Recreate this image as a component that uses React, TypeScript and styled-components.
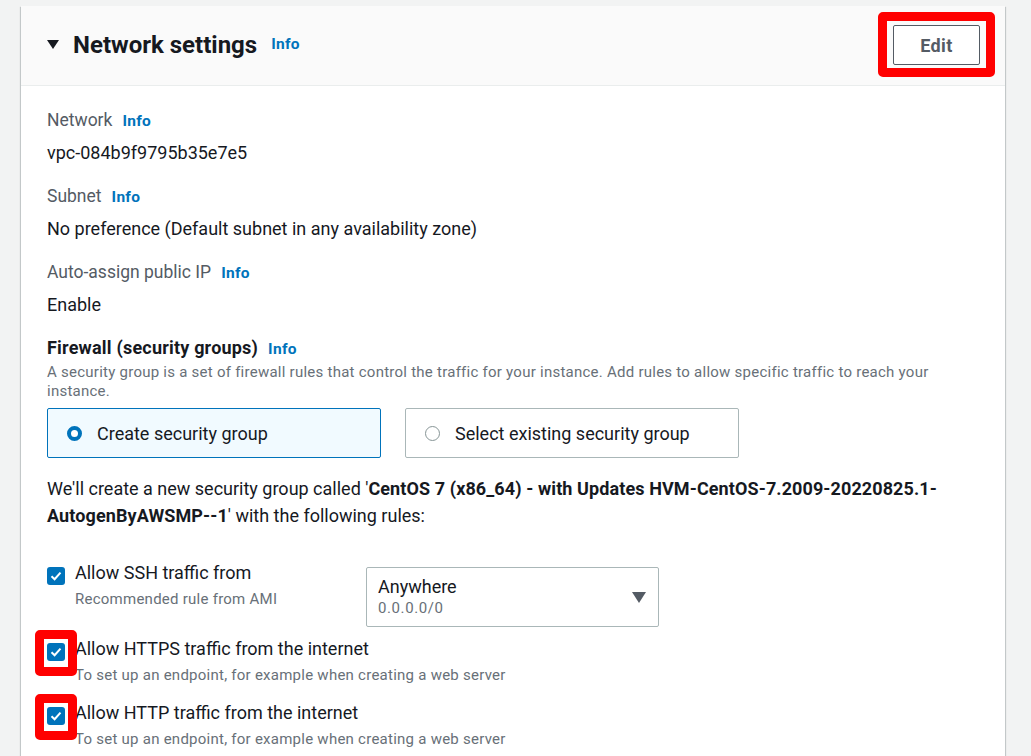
import React from "react";
import styled, { createGlobalStyle } from "styled-components";

const GlobalStyle = createGlobalStyle`
  html, body {
    margin: 0;
    padding: 0;
    background: #f2f3f3;
    font-family: Roboto, "Liberation Sans", sans-serif;
    color: #16191f;
  }
  * { box-sizing: border-box; }
`;

const Page = styled.div`
  padding: 6px 26px 0 21px;
  height: 756px;
  overflow: hidden;
`;

const Card = styled.section`
  width: 984px;
  background: #fff;
  box-shadow: 0 1px 1px 0 rgba(0, 28, 36, 0.3), 1px 1px 1px 0 rgba(0, 28, 36, 0.15),
    -1px 1px 1px 0 rgba(0, 28, 36, 0.15);
`;

const Header = styled.header`
  height: 80px;
  display: flex;
  align-items: center;
  justify-content: space-between;
  padding: 0 26px 2px;
  background: #fafafa;
  border-bottom: 1px solid #eaeded;
`;

const TitleRow = styled.div`
  display: flex;
  align-items: baseline;
  gap: 14px;
`;

const Title = styled.h2`
  margin: 0;
  display: flex;
  align-items: center;
  gap: 14px;
  font-size: 24px;
  font-weight: 700;
  color: #16191f;
`;

const Caret = styled.span`
  width: 0;
  height: 0;
  border-left: 6.5px solid transparent;
  border-right: 6.5px solid transparent;
  border-top: 9px solid #16191f;
`;

const InfoLink = styled.a`
  font-size: 15.5px;
  font-weight: 700;
  letter-spacing: 0.3px;
  color: #0073bb;
  text-decoration: none;
`;

const Highlight = styled.div`
  border: 9px solid #ff0000;
  border-radius: 5px;
  padding: 4px 6px 3px 6px;
  margin-right: -16px;
`;

const EditButton = styled.button`
  width: 87px;
  height: 40px;
  background: #fff;
  border: 1px solid #545b64;
  border-radius: 2px;
  font-family: inherit;
  font-size: 18px;
  font-weight: 700;
  letter-spacing: 0.4px;
  color: #545b64;
`;

const Body = styled.div`
  padding: 22px 26px 30px;
`;

const Field = styled.div`
  margin-bottom: 19px;
`;

const Label = styled.div`
  display: flex;
  align-items: baseline;
  gap: 10px;
  height: 24px;
  font-size: 17.5px;
  line-height: 24px;
  color: #545b64;
`;

const Value = styled.div`
  margin-top: 9px;
  height: 24px;
  font-size: 18px;
  line-height: 24px;
  color: #16191f;
`;

const StrongLabel = styled(Label)`
  font-size: 18px;
  font-weight: 700;
  letter-spacing: 0.2px;
  color: #16191f;
`;

const Description = styled.p`
  margin: 3px 0 0;
  font-size: 15px;
  letter-spacing: 0.25px;
  line-height: 19px;
  color: #687078;
`;

const Tiles = styled.div`
  display: flex;
  gap: 24px;
  margin-top: 7px;
`;

const Tile = styled.div<{ $active?: boolean }>`
  width: 334px;
  height: 50px;
  display: flex;
  align-items: center;
  gap: 15px;
  padding-left: 19px;
  border: 1px solid ${(p) => (p.$active ? "#0073bb" : "#aab7b8")};
  border-radius: 2px;
  background: ${(p) => (p.$active ? "#f1faff" : "#fff")};
  font-size: 18px;
  color: #16191f;
`;

const Radio = styled.span<{ $checked?: boolean }>`
  width: 15px;
  height: 15px;
  border-radius: 50%;
  background: #fff;
  border: ${(p) => (p.$checked ? "4.5px solid #0073bb" : "1px solid #879596")};
`;

const Notice = styled.p`
  margin: 17px 0 0;
  font-size: 18px;
  line-height: 27px;
  color: #16191f;
  b {
    font-weight: 700;
    letter-spacing: 0.1px;
  }
`;

const Rules = styled.div`
  display: flex;
  flex-direction: column;
  gap: 10px;
  margin-top: 32px;
`;

const Rule = styled.div`
  display: flex;
  align-items: flex-start;
  min-height: 54px;
`;

const RuleMain = styled.div<{ $width?: number }>`
  display: flex;
  align-items: flex-start;
  gap: 10px;
  width: ${(p) => (p.$width ? `${p.$width}px` : "auto")};
`;

const CheckWrap = styled.span`
  position: relative;
  margin-top: 6px;
  display: inline-flex;
`;

const Check = styled.span`
  width: 18px;
  height: 18px;
  border-radius: 3px;
  background: #0073bb;
  display: inline-flex;
  align-items: center;
  justify-content: center;
`;

const Mark = styled.span`
  position: absolute;
  top: -13px;
  left: -12px;
  right: -12px;
  bottom: -15px;
  border: 9px solid #ff0000;
  border-radius: 5px;
`;

const RuleText = styled.div`
  display: flex;
  flex-direction: column;
`;

const RuleLabel = styled.span`
  font-size: 18px;
  line-height: 24px;
  color: #16191f;
`;

const RuleHint = styled.span`
  margin-top: 4px;
  font-size: 15px;
  letter-spacing: 0.25px;
  line-height: 20px;
  color: #687078;
`;

const Select = styled.div`
  margin-top: 6px;
  width: 293px;
  height: 60px;
  border: 1px solid #aab7b8;
  border-radius: 2px;
  display: flex;
  align-items: center;
  justify-content: space-between;
  padding: 0 12px 0 11px;
`;

const SelectMain = styled.span`
  font-size: 18px;
  line-height: 22px;
  color: #16191f;
`;

const SelectSub = styled.span`
  margin-top: 1px;
  font-size: 15px;
  letter-spacing: 0.6px;
  line-height: 19px;
  color: #687078;
`;

const SelectText = styled.div`
  display: flex;
  flex-direction: column;
`;

const SelectCaret = styled.span`
  width: 0;
  height: 0;
  border-left: 7px solid transparent;
  border-right: 7px solid transparent;
  border-top: 11px solid #545b64;
`;

const Tick = () => (
  <svg width="12" height="10" viewBox="0 0 12 10">
    <path d="M1.5 5.2 L4.6 8.2 L10.5 1.6" fill="none" stroke="#fff" strokeWidth="2" />
  </svg>
);

const Checkbox = ({ marked }: { marked?: boolean }) => (
  <CheckWrap>
    <Check>
      <Tick />
    </Check>
    {marked && <Mark />}
  </CheckWrap>
);

const fields = [
  { label: "Network", value: "vpc-084b9f9795b35e7e5" },
  { label: "Subnet", value: "No preference (Default subnet in any availability zone)" },
  { label: "Auto-assign public IP", value: "Enable" },
];

const hint = "To set up an endpoint, for example when creating a web server";

const App = () => {
  return (
    <>
      <GlobalStyle />
      <Page>
        <Card>
          <Header>
            <TitleRow>
              <Title>
                <Caret />
                Network settings
              </Title>
              <InfoLink>Info</InfoLink>
            </TitleRow>
            <Highlight>
              <EditButton>Edit</EditButton>
            </Highlight>
          </Header>
          <Body>
            {fields.map((f) => (
              <Field key={f.label}>
                <Label>
                  {f.label}
                  <InfoLink>Info</InfoLink>
                </Label>
                <Value>{f.value}</Value>
              </Field>
            ))}
            <StrongLabel>
              Firewall (security groups)
              <InfoLink>Info</InfoLink>
            </StrongLabel>
            <Description>
              A security group is a set of firewall rules that control the traffic for your
              instance. Add rules to allow specific traffic to reach your instance.
            </Description>
            <Tiles>
              <Tile $active>
                <Radio $checked />
                Create security group
              </Tile>
              <Tile>
                <Radio />
                Select existing security group
              </Tile>
            </Tiles>
            <Notice>
              {"We'll create a new security group called '"}
              <b>CentOS 7 (x86_64) - with Updates HVM-CentOS-7.2009-20220825.1-AutogenByAWSMP--1</b>
              {"' with the following rules:"}
            </Notice>
            <Rules>
              <Rule>
                <RuleMain $width={319}>
                  <Checkbox />
                  <RuleText>
                    <RuleLabel>Allow SSH traffic from</RuleLabel>
                    <RuleHint>Recommended rule from AMI</RuleHint>
                  </RuleText>
                </RuleMain>
                <Select>
                  <SelectText>
                    <SelectMain>Anywhere</SelectMain>
                    <SelectSub>0.0.0.0/0</SelectSub>
                  </SelectText>
                  <SelectCaret />
                </Select>
              </Rule>
              <Rule>
                <RuleMain>
                  <Checkbox marked />
                  <RuleText>
                    <RuleLabel>Allow HTTPS traffic from the internet</RuleLabel>
                    <RuleHint>{hint}</RuleHint>
                  </RuleText>
                </RuleMain>
              </Rule>
              <Rule>
                <RuleMain>
                  <Checkbox marked />
                  <RuleText>
                    <RuleLabel>Allow HTTP traffic from the internet</RuleLabel>
                    <RuleHint>{hint}</RuleHint>
                  </RuleText>
                </RuleMain>
              </Rule>
            </Rules>
          </Body>
        </Card>
      </Page>
    </>
  );
};

export default App;
